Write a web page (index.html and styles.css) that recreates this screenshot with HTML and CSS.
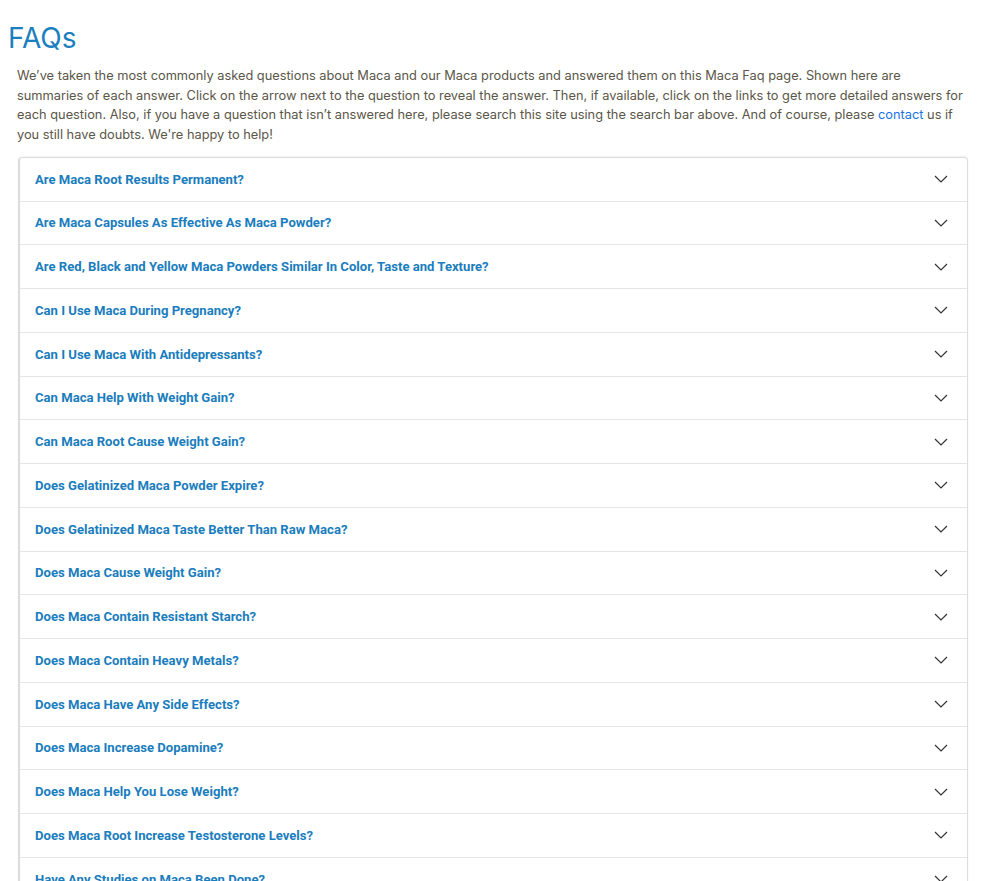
FILE: index.html
```html
<!DOCTYPE html>
<html lang="en">
<head>
    <meta charset="UTF-8">
    <title>FAQs</title>
    <link rel="stylesheet" href="styles.css">
</head>
<body>
    <div class="page">
        <h1>FAQs</h1>
        <p class="intro">We’ve taken the most commonly asked questions about Maca and our Maca products and answered them on this Maca Faq page. Shown here are summaries of each answer. Click on the arrow next to the question to reveal the answer. Then, if available, click on the links to get more detailed answers for each question. Also, if you have a question that isn’t answered here, please search this site using the search bar above. And of course, please <a href="#">contact</a> us if you still have doubts. We're happy to help!</p>

        <div class="accordion">
            <div class="item"><span>Are Maca Root Results Permanent?</span><svg viewBox="0 0 14 8"><path d="M1 1l6 6 6-6"/></svg></div>
            <div class="item"><span>Are Maca Capsules As Effective As Maca Powder?</span><svg viewBox="0 0 14 8"><path d="M1 1l6 6 6-6"/></svg></div>
            <div class="item"><span>Are Red, Black and Yellow Maca Powders Similar In Color, Taste and Texture?</span><svg viewBox="0 0 14 8"><path d="M1 1l6 6 6-6"/></svg></div>
            <div class="item"><span>Can I Use Maca During Pregnancy?</span><svg viewBox="0 0 14 8"><path d="M1 1l6 6 6-6"/></svg></div>
            <div class="item"><span>Can I Use Maca With Antidepressants?</span><svg viewBox="0 0 14 8"><path d="M1 1l6 6 6-6"/></svg></div>
            <div class="item"><span>Can Maca Help With Weight Gain?</span><svg viewBox="0 0 14 8"><path d="M1 1l6 6 6-6"/></svg></div>
            <div class="item"><span>Can Maca Root Cause Weight Gain?</span><svg viewBox="0 0 14 8"><path d="M1 1l6 6 6-6"/></svg></div>
            <div class="item"><span>Does Gelatinized Maca Powder Expire?</span><svg viewBox="0 0 14 8"><path d="M1 1l6 6 6-6"/></svg></div>
            <div class="item"><span>Does Gelatinized Maca Taste Better Than Raw Maca?</span><svg viewBox="0 0 14 8"><path d="M1 1l6 6 6-6"/></svg></div>
            <div class="item"><span>Does Maca Cause Weight Gain?</span><svg viewBox="0 0 14 8"><path d="M1 1l6 6 6-6"/></svg></div>
            <div class="item"><span>Does Maca Contain Resistant Starch?</span><svg viewBox="0 0 14 8"><path d="M1 1l6 6 6-6"/></svg></div>
            <div class="item"><span>Does Maca Contain Heavy Metals?</span><svg viewBox="0 0 14 8"><path d="M1 1l6 6 6-6"/></svg></div>
            <div class="item"><span>Does Maca Have Any Side Effects?</span><svg viewBox="0 0 14 8"><path d="M1 1l6 6 6-6"/></svg></div>
            <div class="item"><span>Does Maca Increase Dopamine?</span><svg viewBox="0 0 14 8"><path d="M1 1l6 6 6-6"/></svg></div>
            <div class="item"><span>Does Maca Help You Lose Weight?</span><svg viewBox="0 0 14 8"><path d="M1 1l6 6 6-6"/></svg></div>
            <div class="item"><span>Does Maca Root Increase Testosterone Levels?</span><svg viewBox="0 0 14 8"><path d="M1 1l6 6 6-6"/></svg></div>
            <div class="item"><span>Have Any Studies on Maca Been Done?</span><svg viewBox="0 0 14 8"><path d="M1 1l6 6 6-6"/></svg></div>
            <div class="item"><span>How Long Does It Take For Maca To Work?</span><svg viewBox="0 0 14 8"><path d="M1 1l6 6 6-6"/></svg></div>
        </div>
    </div>
</body>
</html>
```
FILE: styles.css
```css
body {
    margin: 0;
    padding: 0;
    background: #ffffff;
    font-family: 'Inter', sans-serif;
}

.page {
    padding: 20px 32px 0 8px;
}

h1 {
    margin: 0;
    font-size: 28px;
    font-weight: 400;
    line-height: 36px;
    color: #1a7fbf;
}

.intro {
    margin: 10px 0 12px 9px;
    font-size: 12.8px;
    line-height: 19.7px;
    color: #5a5648;
}

.intro a {
    color: #1b74e4;
    text-decoration: none;
}

.accordion {
    margin-left: 10px;
    border: 1px solid #dcdcdc;
    border-left-width: 2px;
    border-radius: 4px;
    box-shadow: 0 -1px 2px rgba(0, 0, 0, 0.06);
}

.item {
    display: flex;
    align-items: center;
    justify-content: space-between;
    height: 42.75px;
    padding: 0 19px 0 15px;
    border-bottom: 1px solid #e6e6e6;
    font-family: 'Roboto', sans-serif;
    font-weight: bold;
    font-size: 13.1px;
    color: #1a7dbd;
}

.item svg {
    width: 14px;
    height: 8px;
    fill: none;
    stroke: #333;
    stroke-width: 1.2;
}
```
